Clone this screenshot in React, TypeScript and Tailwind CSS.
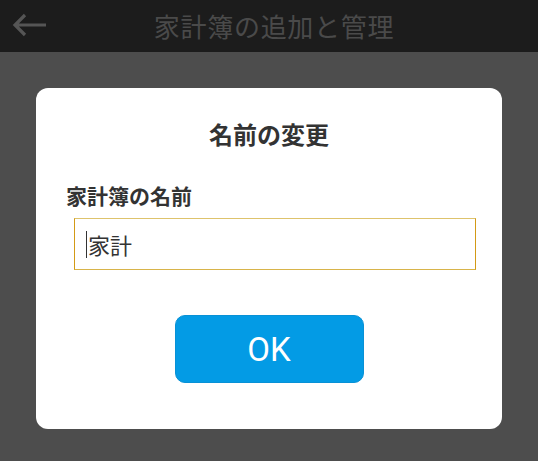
import React from "react";

export default function App() {
  return (
    <div className="w-[538px] h-[461px] flex flex-col bg-[#4d4d4d] font-['Noto_Sans_CJK_JP',sans-serif] overflow-hidden">
      <div className="h-[52px] bg-[#1c1c1c] flex items-center relative shrink-0">
        <svg className="absolute left-[12px] top-[12px]" width="36" height="26" viewBox="0 0 36 26" fill="none">
          <path d="M3 13 H34 M13 3 L3 13 L13 23" stroke="#555555" strokeWidth="3.2" strokeLinecap="butt" strokeLinejoin="miter" />
        </svg>
        <div className="w-full pl-[10px] text-center text-[26px] text-[#4a4a4a] leading-none tracking-[0.7px]">家計簿の追加と管理</div>
      </div>
      <div className="px-[36px] pt-[36px]">
        <div className="bg-white rounded-[12px] h-[341px] flex flex-col">
          <div className="pt-[30px] text-center text-[24px] font-bold text-[#333333] leading-[32px]">名前の変更</div>
          <div className="pl-[30px] pt-[31px] text-[21px] font-bold text-[#333333] leading-[28px]">家計簿の名前</div>
          <div className="ml-[38px] mr-[26px] mt-[9px] h-[52px] border border-[#d39a16] border-t-[#dec36c] border-b-[#d8b44a] border-b-dotted flex items-center px-[11px]">
            <span className="w-px h-[27px] bg-[#333] mr-px"></span>
            <span className="text-[22px] text-[#333333] leading-none">家計</span>
          </div>
          <div className="flex justify-center mt-[45px]">
            <button className="w-[189px] h-[68px] rounded-[10px] bg-[#039be5] border border-[#0891d6] text-white text-[33px] font-['Roboto',sans-serif] leading-none">OK</button>
          </div>
        </div>
      </div>
    </div>
  );
}
